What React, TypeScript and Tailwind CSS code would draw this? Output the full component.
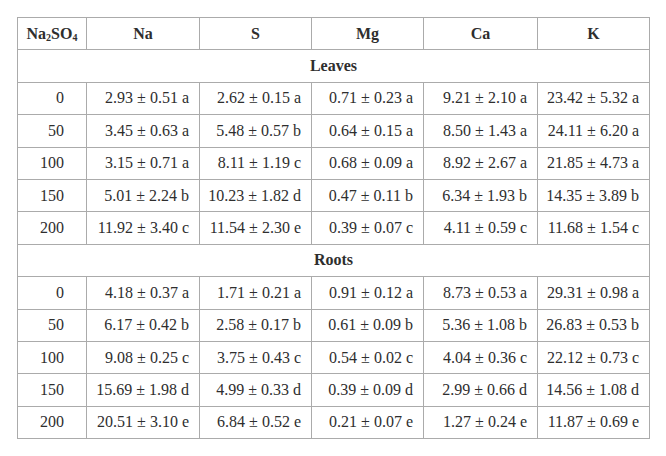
const cols = ['Na', 'S', 'Mg', 'Ca', 'K'];

const leaves = [
  ['0', '2.93 ± 0.51 a', '2.62 ± 0.15 a', '0.71 ± 0.23 a', '9.21 ± 2.10 a', '23.42 ± 5.32 a'],
  ['50', '3.45 ± 0.63 a', '5.48 ± 0.57 b', '0.64 ± 0.15 a', '8.50 ± 1.43 a', '24.11 ± 6.20 a'],
  ['100', '3.15 ± 0.71 a', '8.11 ± 1.19 c', '0.68 ± 0.09 a', '8.92 ± 2.67 a', '21.85 ± 4.73 a'],
  ['150', '5.01 ± 2.24 b', '10.23 ± 1.82 d', '0.47 ± 0.11 b', '6.34 ± 1.93 b', '14.35 ± 3.89 b'],
  ['200', '11.92 ± 3.40 c', '11.54 ± 2.30 e', '0.39 ± 0.07 c', '4.11 ± 0.59 c', '11.68 ± 1.54 c'],
];

const roots = [
  ['0', '4.18 ± 0.37 a', '1.71 ± 0.21 a', '0.91 ± 0.12 a', '8.73 ± 0.53 a', '29.31 ± 0.98 a'],
  ['50', '6.17 ± 0.42 b', '2.58 ± 0.17 b', '0.61 ± 0.09 b', '5.36 ± 1.08 b', '26.83 ± 0.53 b'],
  ['100', '9.08 ± 0.25 c', '3.75 ± 0.43 c', '0.54 ± 0.02 c', '4.04 ± 0.36 c', '22.12 ± 0.73 c'],
  ['150', '15.69 ± 1.98 d', '4.99 ± 0.33 d', '0.39 ± 0.09 d', '2.99 ± 0.66 d', '14.56 ± 1.08 d'],
  ['200', '20.51 ± 3.10 e', '6.84 ± 0.52 e', '0.21 ± 0.07 e', '1.27 ± 0.24 e', '11.87 ± 0.69 e'],
];

function Section({ title, rows }: { title: string; rows: string[][] }) {
  return (
    <>
      <tr className="h-[32.4px]">
        <td colSpan={6} className="border border-[#ababab] p-0 text-center font-bold">
          {title}
        </td>
      </tr>
      {rows.map((r) => (
        <tr key={title + r[0]} className="h-[32.4px]">
          <td className="border border-[#ababab] p-0 pr-[22px] text-right">{r[0]}</td>
          {r.slice(1).map((v, i) => (
            <td key={i} className="border border-[#ababab] p-0 pr-[10px] text-right">
              {v}
            </td>
          ))}
        </tr>
      ))}
    </>
  );
}

export default function App() {
  return (
    <div className="min-h-[456px] w-[666px] bg-white pl-[17px] pt-[17px] font-['Liberation_Serif',serif] text-[16px] leading-[20px] text-[#2e2e2e]">
      <table className="w-[633px] table-fixed border-collapse">
        <colgroup>
          <col className="w-[69px]" />
          <col className="w-[113px]" />
          <col className="w-[112px]" />
          <col className="w-[112px]" />
          <col className="w-[114px]" />
          <col className="w-[112px]" />
        </colgroup>
        <tbody>
          <tr className="h-[32.4px]">
            <td className="border border-[#ababab] p-0 text-center font-bold">
              Na<sub className="text-[10px]">2</sub>SO<sub className="text-[10px]">4</sub>
            </td>
            {cols.map((c) => (
              <td key={c} className="border border-[#ababab] p-0 text-center font-bold">
                {c}
              </td>
            ))}
          </tr>
          <Section title="Leaves" rows={leaves} />
          <Section title="Roots" rows={roots} />
        </tbody>
      </table>
    </div>
  );
}
